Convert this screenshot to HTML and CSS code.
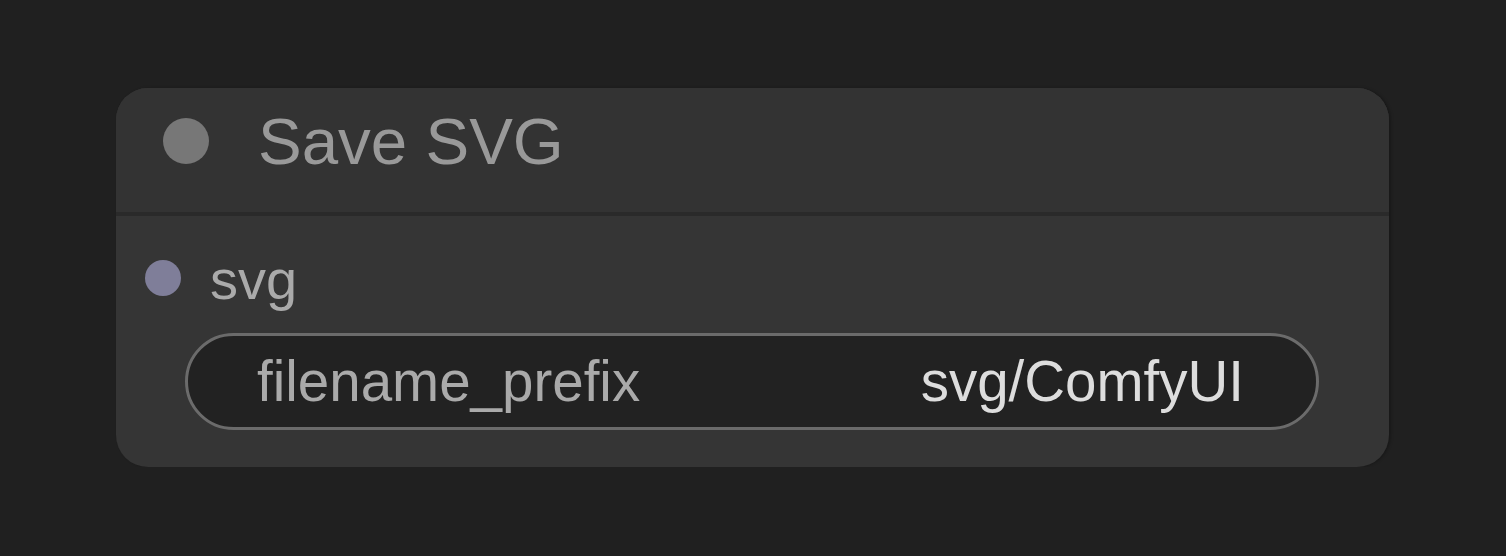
FILE: index.html
```html
<!DOCTYPE html>
<html lang="en">
<head>
    <meta charset="UTF-8">
    <meta name="viewport" content="width=device-width, initial-scale=1.0">
    <title>Save SVG</title>
    <link rel="stylesheet" href="styles.css">
</head>
<body>
    <div class="node">
        <div class="node-title">
            <span class="title-dot"></span>
            <span class="title-text">Save SVG</span>
        </div>
        <div class="node-body">
            <div class="slot">
                <span class="slot-dot"></span>
                <span class="slot-label">svg</span>
            </div>
            <div class="widget">
                <span class="widget-name">filename_prefix</span>
                <span class="widget-value">svg/ComfyUI</span>
            </div>
        </div>
    </div>
</body>
</html>
```

FILE: styles.css
```css
body {
    font-family: "Liberation Sans", Arial, sans-serif;
    background-color: #202020;
    margin: 0;
    padding: 88px 0 0 116px;
}
.node {
    width: 1273px;
    background-color: #353535;
    border-radius: 32px;
    overflow: hidden;
    box-shadow: 2px 0 3px rgba(0, 0, 0, 0.25);
}
.node-title {
    box-sizing: border-box;
    height: 128px;
    display: flex;
    align-items: center;
    padding: 0 0 18px 47px;
    background-color: #333;
    border-bottom: 4px solid #2a2a2a;
}
.title-dot {
    width: 46px;
    height: 46px;
    border-radius: 50%;
    background-color: #777;
    flex-shrink: 0;
}
.title-text {
    margin-left: 49px;
    font-size: 65.5px;
    color: #999;
}
.node-body {
    display: flex;
    flex-direction: column;
    padding: 33px 70px 37px 29px;
}
.slot {
    display: flex;
    align-items: flex-start;
    height: 63px;
}
.slot-dot {
    width: 36px;
    height: 36px;
    border-radius: 50%;
    background-color: #7f7e99;
    margin-top: 11px;
    flex-shrink: 0;
}
.slot-label {
    margin-left: 29px;
    font-size: 56px;
    line-height: 63px;
    color: #aaa;
    margin-top: -1px;
}
.widget {
    box-sizing: border-box;
    margin: 21px 0 0 40px;
    height: 97px;
    display: flex;
    align-items: center;
    justify-content: space-between;
    padding: 0 72px 0 69px;
    background-color: #222;
    border: 3px solid #6b6b6b;
    border-radius: 49px;
    font-size: 56.5px;
}
.widget-name {
    color: #aaa;
}
.widget-value {
    color: #ddd;
}
```
